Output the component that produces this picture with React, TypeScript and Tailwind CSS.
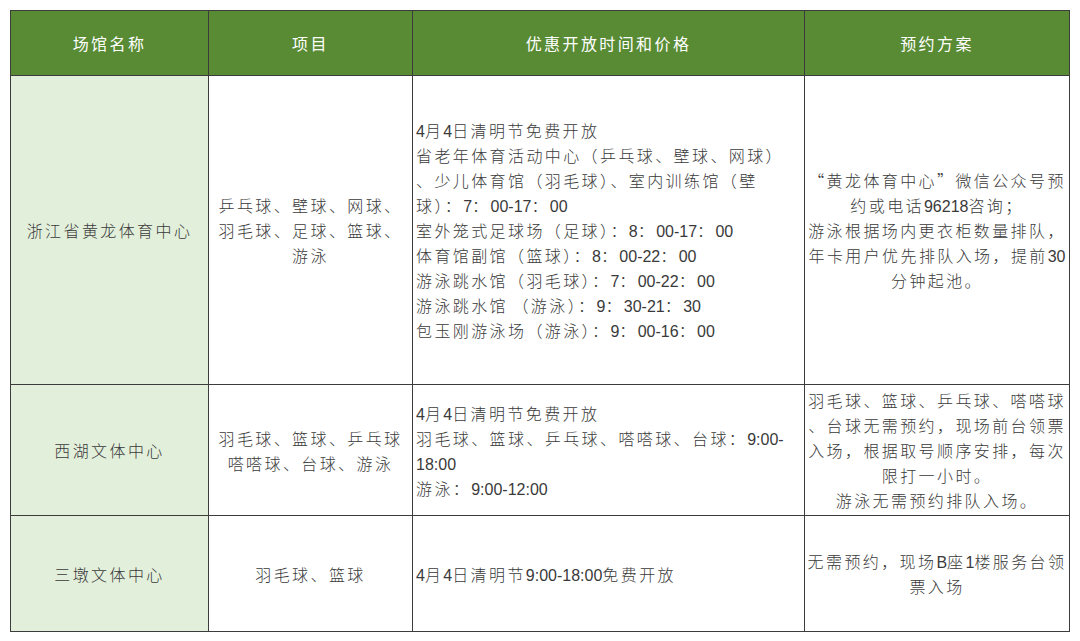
import React from "react";

const FONT = "font-['Noto_Sans_CJK_SC','Noto_Sans',sans-serif]";

function T({ s }: { s: string }) {
  const parts = s.split(/([\x20-\x7E]+)/).filter((p) => p.length > 0);
  return (
    <>
      {parts.map((p, i) =>
        /^[\x20-\x7E]+$/.test(p) ? (
          <span
            key={i}
            className="tracking-normal font-['Liberation_Sans_Narrow','Liberation_Sans',sans-serif] text-[16px] leading-none"
          >
            {p}
          </span>
        ) : (
          <span key={i} className="leading-none">
            {p}
          </span>
        )
      )}
    </>
  );
}

function Lines({ lines, align }: { lines: string[]; align: "center" | "left" }) {
  return (
    <div className={align === "center" ? "flex flex-col items-center" : "flex flex-col items-start"}>
      {lines.map((l, i) => (
        <div key={i} className="whitespace-nowrap h-[25px] flex items-center">
          <div>
            <T s={l} />
          </div>
        </div>
      ))}
    </div>
  );
}

const rows = [
  {
    h: "h-[309px]",
    name: ["浙江省黄龙体育中心"],
    items: ["乒乓球、壁球、网球、", "羽毛球、足球、篮球、", "游泳"],
    time: [
      "4月4日清明节免费开放",
      "省老年体育活动中心（乒乓球、壁球、网球）",
      "、少儿体育馆（羽毛球）、室内训练馆（壁",
      "球）：7：00-17：00",
      "室外笼式足球场（足球）：8：00-17：00",
      "体育馆副馆（篮球）：8：00-22：00",
      "游泳跳水馆（羽毛球）：7：00-22：00",
      "游泳跳水馆 （游泳）：9：30-21：30",
      "包玉刚游泳场（游泳）：9：00-16：00",
    ],
    plan: [
      "“黄龙体育中心”微信公众号预",
      "约或电话96218咨询；",
      "游泳根据场内更衣柜数量排队，",
      "年卡用户优先排队入场，提前30",
      "分钟起池。",
    ],
  },
  {
    h: "h-[131px]",
    name: ["西湖文体中心"],
    items: ["羽毛球、篮球、乒乓球", "嗒嗒球、台球、游泳"],
    time: [
      "4月4日清明节免费开放",
      "羽毛球、篮球、乒乓球、嗒嗒球、台球：9:00-",
      "18:00",
      "游泳：9:00-12:00",
    ],
    plan: [
      "羽毛球、篮球、乒乓球、嗒嗒球",
      "、台球无需预约，现场前台领票",
      "入场，根据取号顺序安排，每次",
      "限打一小时。",
      "游泳无需预约排队入场。",
    ],
  },
  {
    h: "h-[116px]",
    name: ["三墩文体中心"],
    items: ["羽毛球、篮球"],
    time: ["4月4日清明节9:00-18:00免费开放"],
    plan: ["无需预约，现场B座1楼服务台领", "票入场"],
  },
];

export default function App() {
  const cell = "border-[1.5px] border-[#3c3c3c] align-middle p-0";
  return (
    <div className={`w-[1080px] h-[641px] bg-white ${FONT} font-light text-[16px] text-[#3a3a3a] tracking-[2.4px]`}>
      <div className="pt-[10px] pl-[10px]">
        <table className="border-collapse table-fixed w-[1059px]">
          <colgroup>
            <col className="w-[198px]" />
            <col className="w-[204px]" />
            <col className="w-[392px]" />
            <col className="w-[265px]" />
          </colgroup>
          <thead>
            <tr className="h-[65px] bg-[#588b33] text-white">
              {["场馆名称", "项目", "优惠开放时间和价格", "预约方案"].map((t) => (
                <th key={t} className={`${cell} font-normal text-center`}>
                  {t}
                </th>
              ))}
            </tr>
          </thead>
          <tbody>
            {rows.map((r, i) => (
              <tr key={i} className={r.h}>
                <td className={`${cell} bg-[#e2efda]`}>
                  <Lines lines={r.name} align="center" />
                </td>
                <td className={cell}>
                  <Lines lines={r.items} align="center" />
                </td>
                <td className={`${cell} pl-[3px]`}>
                  <Lines lines={r.time} align="left" />
                </td>
                <td className={cell}>
                  <Lines lines={r.plan} align="center" />
                </td>
              </tr>
            ))}
          </tbody>
        </table>
      </div>
    </div>
  );
}
